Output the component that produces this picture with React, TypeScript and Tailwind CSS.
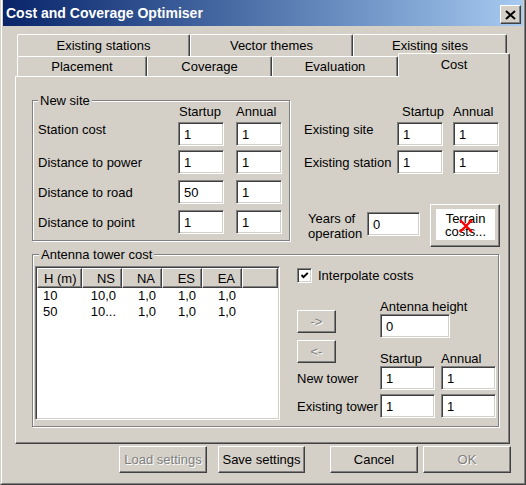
const raised =
  'border border-t-white border-l-white border-r-[#404040] border-b-[#404040] shadow-[inset_-1px_-1px_0_#808080] bg-[#d4d0c8]'
const sunken =
  'border border-t-[#808080] border-l-[#808080] border-r-white border-b-white shadow-[inset_1px_1px_0_#404040,inset_-1px_-1px_0_#d4d0c8] bg-white'
const etched = 'relative border border-[#808080] shadow-[inset_1px_1px_0_#fff,1px_1px_0_#fff]'
const disabled = 'text-[#808080] [text-shadow:1px_1px_0_#fff]'

function Field({ value, className }: { value: string; className: string }) {
  return (
    <div className={`${sunken} ${className} h-[24px] flex items-center pl-[5px]`}>
      {value}
    </div>
  )
}

function Button({ label, off, className }: { label: string; off?: boolean; className: string }) {
  return (
    <div className={`${raised} ${className} flex items-center justify-center ${off ? disabled : ''}`}>
      {label}
    </div>
  )
}

function Tab({ label, className }: { label: string; className: string }) {
  return (
    <div
      className={`flex items-center justify-center border-t border-l border-r border-t-white border-l-white border-r-[#404040] shadow-[inset_-1px_0_0_#808080] rounded-t-[2px] bg-[#d4d0c8] ${className}`}
    >
      {label}
    </div>
  )
}

const columns = [
  { name: 'H (m)', w: 'w-[45px] justify-start pl-[6px]' },
  { name: 'NS', w: 'w-[40px] justify-end pr-[6px]' },
  { name: 'NA', w: 'w-[40px] justify-end pr-[6px]' },
  { name: 'ES', w: 'w-[40px] justify-end pr-[6px]' },
  { name: 'EA', w: 'w-[40px] justify-end pr-[6px]' },
]

const towers = [
  ['10', '10,0', '1,0', '1,0', '1,0'],
  ['50', '10...', '1,0', '1,0', '1,0'],
]

function TowerList() {
  return (
    <div className={`${sunken} ml-[2px] mt-[11px] w-[245px] h-[154px] p-px`}>
      <div className="flex h-[20px]">
        {columns.map((c) => (
          <div key={c.name} className={`${raised} ${c.w} flex items-center`}>
            {c.name}
          </div>
        ))}
        <div className={`${raised} flex-1`} />
      </div>
      {towers.map((row) => (
        <div key={row[0]} className="flex h-[16px] leading-[16px]">
          {row.map((v, i) => (
            <div key={i} className={`${columns[i].w} flex`}>
              {v}
            </div>
          ))}
        </div>
      ))}
    </div>
  )
}

export default function App() {
  return (
    <div className="w-[526px] h-[485px] bg-[#d4d0c8] border-l border-r border-b border-l-[#d4d0c8] border-r-[#404040] border-b-[#404040] [font-family:'Liberation_Sans',Arial,sans-serif] text-[13px] leading-[15px] text-black">
      <div className="h-full border-l border-r border-b border-l-white border-r-[#808080] border-b-[#808080] px-px pb-px">
        {/* title bar */}
        <div className="h-[26px] flex justify-between bg-gradient-to-r from-[#0a246a] to-[#a6caf0]">
          <div className="pl-[3px] flex items-center text-white font-bold text-[14px]">
            Cost and Coverage Optimiser
          </div>
          <div className={`${raised} mt-[5px] mr-[2px] w-[21px] h-[19px] flex items-center justify-center`}>
            <svg width="11" height="10" viewBox="0 0 11 10">
              <path d="M1 1 L10 9 M10 1 L1 9" stroke="#000" strokeWidth="2" />
            </svg>
          </div>
        </div>

        {/* tabs */}
        <div className="mt-[8px] ml-[14px] flex h-[22px]">
          <Tab label="Existing stations" className="w-[173px]" />
          <Tab label="Vector themes" className="w-[163px]" />
          <Tab label="Existing sites" className="w-[154px]" />
        </div>
        <div className="ml-[14px] flex h-[20px]">
          <Tab label="Placement" className="w-[130px] h-[20px]" />
          <Tab label="Coverage" className="w-[125px] h-[20px]" />
          <Tab label="Evaluation" className="w-[126px] h-[20px]" />
          <Tab label="Cost" className="relative z-10 w-[112px] h-[24px] -mt-[3px] pb-[3px]" />
        </div>

        {/* tab page */}
        <div className="ml-[12px] w-[495px] h-[368px] border border-t-white border-l-white border-r-[#404040] border-b-[#404040] shadow-[inset_-1px_-1px_0_#808080] pl-[16px]">
          <div className="flex items-start h-[177px]">
            <div className={`${etched} mt-[23px] w-[258px] h-[141px] pl-[5px] pt-[3px]`}>
              <span className="absolute -top-[8px] left-[5px] px-[2px] bg-[#d4d0c8]">New site</span>
              <div className="flex h-[15px]">
                <span className="w-[141px]" />
                <span className="w-[57px]">Startup</span>
                <span>Annual</span>
              </div>
              <div className="flex items-center mt-[3px]">
                <span className="w-[140px] self-start">Station cost</span>
                <Field value="1" className="w-[46px]" />
                <Field value="1" className="w-[46px] ml-[12px]" />
              </div>
              <div className="flex items-center mt-[4px]">
                <span className="w-[140px]">Distance to power</span>
                <Field value="1" className="w-[46px]" />
                <Field value="1" className="w-[46px] ml-[12px]" />
              </div>
              <div className="flex items-center mt-[6px]">
                <span className="w-[140px]">Distance to road</span>
                <Field value="50" className="w-[46px]" />
                <Field value="1" className="w-[46px] ml-[12px]" />
              </div>
              <div className="flex items-center mt-[6px]">
                <span className="w-[140px]">Distance to point</span>
                <Field value="1" className="w-[46px]" />
                <Field value="1" className="w-[46px] ml-[12px]" />
              </div>
            </div>

            <div className="ml-[14px] pt-[27px]">
              <div className="flex h-[15px]">
                <span className="w-[98px]" />
                <span className="w-[51px]">Startup</span>
                <span>Annual</span>
              </div>
              <div className="flex items-center mt-[3px]">
                <span className="w-[93px] self-start">Existing site</span>
                <Field value="1" className="w-[46px]" />
                <Field value="1" className="w-[46px] ml-[10px]" />
              </div>
              <div className="flex items-center mt-[4px]">
                <span className="w-[93px]">Existing station</span>
                <Field value="1" className="w-[46px]" />
                <Field value="1" className="w-[46px] ml-[10px]" />
              </div>
              <div className="flex items-start mt-[30px]">
                <span className="ml-[4px] w-[59px] mt-[7px]">
                  Years of
                  <br />
                  operation
                </span>
                <Field value="0" className="w-[53px] mt-[8px]" />
                <div className={`${raised} relative ml-[10px] w-[70px] h-[43px] pl-[5px] pr-[4px] py-[5px]`}>
                  <div className="h-full bg-white flex flex-col items-center justify-center leading-[13px] -mt-px">
                    <span>Terrain</span>
                    <span>costs...</span>
                  </div>
                  <svg className="absolute left-[28px] top-[14px]" width="14" height="14" viewBox="0 0 14 14">
                    <path d="M1 1 L13 13 M13 1 L1 13" stroke="#f00" strokeWidth="2.4" />
                  </svg>
                </div>
              </div>
            </div>
          </div>

          <div className={`${etched} w-[467px] h-[173px] flex items-start`}>
            <span className="absolute -top-[8px] left-[6px] px-[2px] bg-[#d4d0c8]">Antenna tower cost</span>
            <TowerList />
            <div className="ml-[17px] pt-[13px]">
              <div className="flex items-center h-[15px]">
                <div className={`${sunken} w-[15px] h-[15px] flex items-center justify-center`}>
                  <svg width="9" height="9" viewBox="0 0 9 9">
                    <path d="M1.5 4 L3.5 6.2 L7.8 1.8" fill="none" stroke="#000" strokeWidth="1.9" />
                  </svg>
                </div>
                <span className="ml-[6px]">Interpolate costs</span>
              </div>
              <div className="flex mt-[17px]">
                <div className="w-[39px]">
                  <Button label="->" off className="mt-[10px] w-[39px] h-[23px]" />
                  <Button label="<-" off className="mt-[7px] w-[39px] h-[23px]" />
                </div>
                <div className="ml-[44px]">
                  <div className="h-[14px] leading-[14px]">Antenna height</div>
                  <Field value="0" className="w-[70px]" />
                  <div className="flex mt-[14px] h-[14px] leading-[14px]">
                    <span className="w-[61px]">Startup</span>
                    <span>Annual</span>
                  </div>
                </div>
              </div>
              <div className="flex items-center">
                <span className="w-[83px]">New tower</span>
                <Field value="1" className="w-[55px]" />
                <Field value="1" className="w-[55px] ml-[6px]" />
              </div>
              <div className="flex items-center mt-[4px]">
                <span className="w-[83px]">Existing tower</span>
                <Field value="1" className="w-[55px]" />
                <Field value="1" className="w-[55px] ml-[6px]" />
              </div>
            </div>
          </div>
        </div>

        {/* dialog buttons */}
        <div className="flex mt-[2px] ml-[116px]">
          <Button label="Load settings" off className="w-[88px] h-[27px]" />
          <Button label="Save settings" className="w-[87px] h-[27px] ml-[11px]" />
          <Button label="Cancel" className="w-[88px] h-[27px] ml-[25px]" />
          <Button label="OK" off className="w-[88px] h-[27px] ml-[5px]" />
        </div>
      </div>
    </div>
  )
}
